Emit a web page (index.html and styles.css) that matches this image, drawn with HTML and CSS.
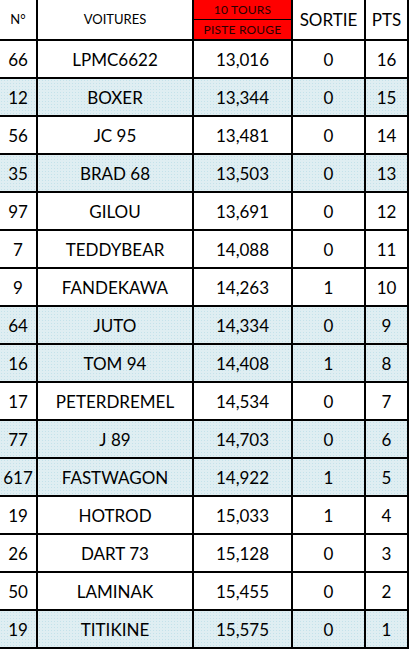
FILE: index.html
```html
<!DOCTYPE html>
<html>
<head>
<meta charset="utf-8">
<link rel="stylesheet" href="styles.css">
</head>
<body>
<div class="table">
  <div class="cell head small">N°</div>
  <div class="cell head small">VOITURES</div>
  <div class="cell head red">
    <div class="half">10 TOURS</div>
    <div class="half">PISTE ROUGE</div>
  </div>
  <div class="cell head big">SORTIE</div>
  <div class="cell head big">PTS</div>

  <div class="cell">66</div><div class="cell">LPMC6622</div><div class="cell">13,016</div><div class="cell">0</div><div class="cell">16</div>
  <div class="cell alt">12</div><div class="cell alt">BOXER</div><div class="cell alt">13,344</div><div class="cell alt">0</div><div class="cell alt">15</div>
  <div class="cell">56</div><div class="cell">JC 95</div><div class="cell">13,481</div><div class="cell">0</div><div class="cell">14</div>
  <div class="cell alt">35</div><div class="cell alt">BRAD 68</div><div class="cell alt">13,503</div><div class="cell alt">0</div><div class="cell alt">13</div>
  <div class="cell">97</div><div class="cell">GILOU</div><div class="cell">13,691</div><div class="cell">0</div><div class="cell">12</div>
  <div class="cell">7</div><div class="cell">TEDDYBEAR</div><div class="cell">14,088</div><div class="cell">0</div><div class="cell">11</div>
  <div class="cell">9</div><div class="cell">FANDEKAWA</div><div class="cell">14,263</div><div class="cell">1</div><div class="cell">10</div>
  <div class="cell alt">64</div><div class="cell alt">JUTO</div><div class="cell alt">14,334</div><div class="cell alt">0</div><div class="cell alt">9</div>
  <div class="cell alt">16</div><div class="cell alt">TOM 94</div><div class="cell alt">14,408</div><div class="cell alt">1</div><div class="cell alt">8</div>
  <div class="cell">17</div><div class="cell">PETERDREMEL</div><div class="cell">14,534</div><div class="cell">0</div><div class="cell">7</div>
  <div class="cell alt">77</div><div class="cell alt">J 89</div><div class="cell alt">14,703</div><div class="cell alt">0</div><div class="cell alt">6</div>
  <div class="cell alt">617</div><div class="cell alt">FASTWAGON</div><div class="cell alt">14,922</div><div class="cell alt">1</div><div class="cell alt">5</div>
  <div class="cell">19</div><div class="cell">HOTROD</div><div class="cell">15,033</div><div class="cell">1</div><div class="cell">4</div>
  <div class="cell">26</div><div class="cell">DART 73</div><div class="cell">15,128</div><div class="cell">0</div><div class="cell">3</div>
  <div class="cell">50</div><div class="cell">LAMINAK</div><div class="cell">15,455</div><div class="cell">0</div><div class="cell">2</div>
  <div class="cell alt">19</div><div class="cell alt">TITIKINE</div><div class="cell alt">15,575</div><div class="cell alt">0</div><div class="cell alt">1</div>
</div>
</body>
</html>
```
FILE: styles.css
```css
html, body {
  margin: 0;
  padding: 0;
  background: #ffffff;
}
body {
  font-family: Lato, "Liberation Sans", sans-serif;
  color: #000;
}
.table {
  width: 409px;
  box-sizing: border-box;
  display: grid;
  grid-template-columns: 36px 154px 97px 71px 41px;
  grid-template-rows: 39px repeat(16, 36px);
  gap: 2px;
  padding: 0 2px 2px 0;
  background: #000;
}
.cell {
  background: #fff;
  display: flex;
  align-items: center;
  justify-content: center;
  font-size: 17px;
  line-height: 1;
  white-space: nowrap;
}
.alt {
  background-color: #dfeef2;
  background-image: radial-gradient(circle, #c4e2ea 0.7px, transparent 0.9px);
  background-size: 3px 3px;
}
.head.small {
  font-size: 13px;
}
.head.big {
  font-size: 17px;
}
.red {
  background: #000;
  flex-direction: column;
  align-items: stretch;
  gap: 1px;
}
.half {
  flex: 1;
  background: #ff0000;
  color: #2a0000;
  font-size: 12px;
  letter-spacing: 0.2px;
  display: flex;
  align-items: center;
  justify-content: center;
}
```
